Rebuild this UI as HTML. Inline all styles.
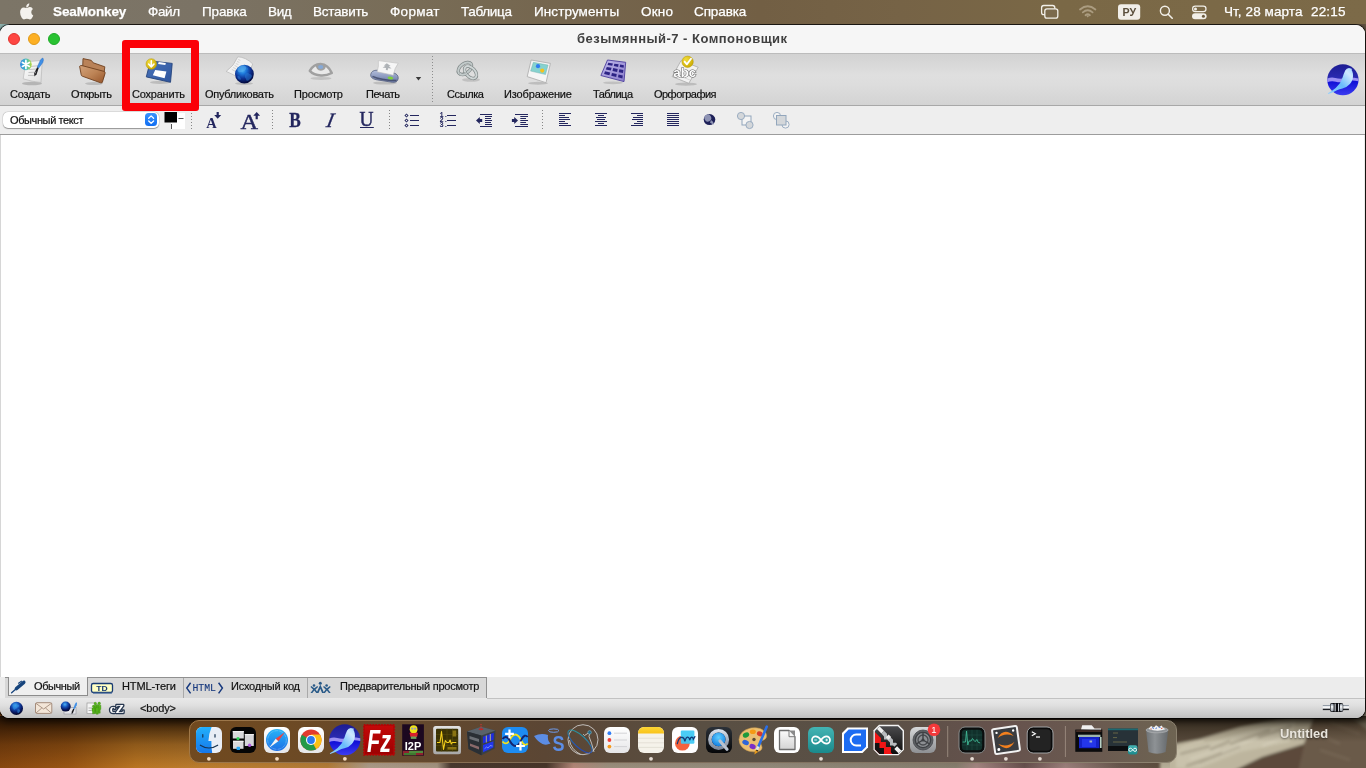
<!DOCTYPE html>
<html lang="ru">
<head>
<meta charset="utf-8">
<title>безымянный-7 - Компоновщик</title>
<style>
html,body{margin:0;padding:0;}
body{width:1366px;height:768px;overflow:hidden;position:relative;background:#8a7a66;font-family:"Liberation Sans",sans-serif;color:#000;}
.abs{position:absolute;}
.t{position:absolute;white-space:nowrap;line-height:1;will-change:transform;}
.t[style*="font-size:11px"]{-webkit-text-stroke:.2px #111;}
/* wallpaper */
#wall{left:0;top:0;width:1366px;height:768px;background:#6a5a48;}
/* menubar */
#menubar{z-index:3;left:0;top:0;width:1366px;height:24px;background:linear-gradient(90deg,#7c7567 0px,#7b7365 200px,#786c56 420px,#74644c 600px,#725f44 760px,#766346 900px,#7a6846 1060px,#7c6a48 1366px);}
#menubar .t{color:#fff;font-size:13.5px;top:4.800px;-webkit-text-stroke:.25px #fff;}
/* window */
#win{left:0;top:25px;width:1365px;height:693px;background:#ececec;border-radius:9px;overflow:hidden;}
#titlebar{left:0;top:0;width:1366px;height:28px;background:#f6f6f6;}
#toolbar{left:0;top:28px;width:1366px;height:53px;background:linear-gradient(180deg,#d2d2d2 0%,#dfdfdf 42%,#dddddd 60%,#d3d3d3 100%);border-top:1px solid #bcbcbc;border-bottom:1px solid #a8a8a8;box-sizing:border-box;}
#fmtbar{left:0;top:81px;width:1366px;height:29px;background:#eeeeee;border-bottom:1px solid #9c9c9c;box-sizing:border-box;}
#editor{left:1px;top:110px;width:1363px;height:542px;background:#fff;}
#tabbar{left:0;top:652px;width:1366px;height:21px;background:#ececec;}
#statusbar{left:0;top:673px;width:1366px;height:20px;background:linear-gradient(180deg,#e9e9e9 0%,#e0e0e0 35%,#c8c8c8 85%,#bebebe 100%);}
.tl{position:absolute;top:8px;width:12px;height:12px;border-radius:50%;box-sizing:border-box;}
.lbl{-webkit-text-stroke:.2px #111;will-change:transform;position:absolute;white-space:nowrap;font-size:11px;line-height:1;top:88.5px;color:#111;}
</style>
</head>
<body>
<div id="wall" class="abs">
<svg class="abs" style="left:0;top:690px;" width="1366" height="78" viewBox="0 690 1366 78">
  <defs>
    <linearGradient id="wH" x1="0" y1="0" x2="1366" y2="0" gradientUnits="userSpaceOnUse">
      <stop offset="0" stop-color="#8c4a10"/><stop offset=".05" stop-color="#9e5814"/><stop offset=".1" stop-color="#c07a24"/><stop offset=".15" stop-color="#c28230"/><stop offset=".24" stop-color="#b8803a"/>
      <stop offset=".27" stop-color="#b0a08c"/><stop offset=".32" stop-color="#a89884"/><stop offset=".33" stop-color="#4a3a30"/><stop offset=".4" stop-color="#4a382c"/><stop offset=".42" stop-color="#b88c7c"/><stop offset=".445" stop-color="#a09482"/>
      <stop offset=".55" stop-color="#989080"/><stop offset=".7" stop-color="#8a8272"/><stop offset=".715" stop-color="#a88a86"/><stop offset=".75" stop-color="#6a5250"/><stop offset=".78" stop-color="#a08480"/><stop offset=".82" stop-color="#6a5a50"/><stop offset=".86" stop-color="#5e4e3c"/><stop offset="1" stop-color="#6a5a4a"/>
    </linearGradient>
    <linearGradient id="wV" x1="0" y1="716" x2="0" y2="768" gradientUnits="userSpaceOnUse">
      <stop offset="0" stop-color="#1a0c02" stop-opacity=".9"/><stop offset=".22" stop-color="#1a0c02" stop-opacity=".68"/><stop offset=".55" stop-color="#1a0c02" stop-opacity=".3"/><stop offset="1" stop-color="#1a0c02" stop-opacity=".04"/>
    </linearGradient>
    <linearGradient id="wV2" x1="0" y1="716" x2="0" y2="742" gradientUnits="userSpaceOnUse"><stop offset="0" stop-color="#1a1206" stop-opacity=".8"/><stop offset=".3" stop-color="#1a1206" stop-opacity=".4"/><stop offset="1" stop-color="#1a1206" stop-opacity="0"/></linearGradient>
    <filter id="wb" x="-10%" y="-30%" width="120%" height="160%"><feGaussianBlur stdDeviation="3"/></filter>
    <filter id="wb1" x="-10%" y="-30%" width="120%" height="160%"><feGaussianBlur stdDeviation="1.600"/></filter>
  </defs>
  <rect x="0" y="690" width="1366" height="78" fill="url(#wH)"/>
  <g filter="url(#wb1)">
    <rect x="1160" y="700" width="220" height="80" fill="#56483a"/>
    <polygon points="1160,747 1200,739 1240,727 1285,718 1300,714 1316,714 1304,744 1262,757 1225,775 1160,775" fill="#bdb59e"/>
    <polygon points="1176,750 1215,741 1250,730 1296,720 1290,742 1240,752 1200,768 1176,768" fill="#c9c2ac"/>
    <polygon points="1316,710 1380,710 1380,780 1288,780 1303,747" fill="#6a5a4a"/>
    <polygon points="1232,775 1266,757 1304,746 1296,780" fill="#5c4a3a"/>
    <polygon points="1345,712 1380,712 1380,740" fill="#8a8270"/>
  </g>
  <g filter="url(#wb1)" opacity=".6">
    <path d="M1180 754 l30 -8 M1200 762 l40 -16 M1230 744 l40 -14 M1186 766 l24 -8 M1256 738 l36 -12 M1210 750 l20 -9" stroke="#8c8470" stroke-width="2"/>
    <path d="M1190 759 l30 -10 M1222 752 l36 -15 M1262 746 l30 -12 M1180 748 l24 -7" stroke="#ded8c4" stroke-width="1.800"/>
    <path d="M1310 730 l30 14 M1320 750 l30 10 M1330 722 l30 12" stroke="#7c6c5a" stroke-width="2.500"/>
  </g>
  <rect x="0" y="716" width="1170" height="52" fill="url(#wV)"/>
  <rect x="1170" y="716" width="196" height="26" fill="url(#wV2)"/>
</svg>
</div>

<div id="menubar" class="abs">
  <span class="t" style="left:53.0px;letter-spacing:-0.125px;font-weight:bold;">SeaMonkey</span>
  <span class="t" style="left:148.2px;letter-spacing:-0.368px;">Файл</span>
  <span class="t" style="left:201.9px;letter-spacing:-0.162px;">Правка</span>
  <span class="t" style="left:268.1px;letter-spacing:-0.369px;">Вид</span>
  <span class="t" style="left:313.4px;letter-spacing:-0.262px;">Вставить</span>
  <span class="t" style="left:390.4px;letter-spacing:0.306px;">Формат</span>
  <span class="t" style="left:461.3px;letter-spacing:-0.323px;">Таблица</span>
  <span class="t" style="left:534.0px;letter-spacing:0.091px;">Инструменты</span>
  <span class="t" style="left:640.8px;letter-spacing:0.208px;">Окно</span>
  <span class="t" style="left:694.2px;letter-spacing:-0.111px;">Справка</span>
  <span class="t" style="left:1224.0px;letter-spacing:0.091px;">Чт, 28 марта</span>
  <span class="t" style="left:1310.8px;letter-spacing:0.176px;">22:15</span>
</div>

<div class="abs" style="left:0;top:24px;width:9px;height:9px;background:#9cc4c0;"></div>
<div id="winshadow" class="abs" style="left:0;top:25px;width:1365px;height:693px;border-radius:9px;box-shadow:0 0 0 1px rgba(0,0,0,.66),0 2px 7px 2px rgba(0,0,0,.62);"></div>
<div id="win" class="abs">
  <div id="titlebar" class="abs">
    <div class="tl" style="left:8px;background:#fe4743;border:1px solid #e0352f;"></div>
    <div class="tl" style="left:28px;background:#fdb024;border:1px solid #e09a1a;"></div>
    <div class="tl" style="left:48px;background:#29c232;border:1px solid #1faa28;"></div>
    <span class="t" style="left:577px;top:7.100px;font-size:13px;font-weight:bold;color:#404040;letter-spacing:.47px;">безымянный-7 - Компоновщик</span>
  </div>
  <div id="toolbar" class="abs"></div>
  <div id="fmtbar" class="abs"></div>
  <div id="editor" class="abs"></div>
  <div id="tabbar" class="abs"></div>
  <div id="statusbar" class="abs"></div>
</div>

<!-- TOOLBAR LABELS -->
<div id="tlabels" class="abs" style="left:0;top:0;">
  <span class="lbl" style="left:10px;letter-spacing:-0.22px;">Создать</span>
  <span class="lbl" style="left:70.5px;letter-spacing:-0.37px;">Открыть</span>
  <span class="lbl" style="left:131.900px;letter-spacing:-0.21px;">Сохранить</span>
  <span class="lbl" style="left:205px;letter-spacing:-0.27px;">Опубликовать</span>
  <span class="lbl" style="left:294px;letter-spacing:-0.18px;">Просмотр</span>
  <span class="lbl" style="left:366px;letter-spacing:-0.41px;">Печать</span>
  <span class="lbl" style="left:447px;letter-spacing:-0.39px;">Ссылка</span>
  <span class="lbl" style="left:504px;letter-spacing:-0.13px;">Изображение</span>
  <span class="lbl" style="left:593px;letter-spacing:-0.52px;">Таблица</span>
  <span class="lbl" style="left:653.5px;letter-spacing:-0.53px;">Орфография</span>
</div>

<!-- FORMAT SELECT -->
<div class="abs" style="left:3px;top:111.5px;width:156px;height:16.200px;background:#fff;border-radius:5px;box-shadow:0 0 0 .5px rgba(0,0,0,.1),0 .7px 1px rgba(0,0,0,.34);"></div>
<div class="abs" style="left:0;top:135px;width:1px;height:542px;background:#d6d6d6;"></div>
<span class="t" style="left:9.800px;top:114.700px;font-size:11px;letter-spacing:-0.39px;color:#111;-webkit-text-stroke:.2px #111;">Обычный текст</span>
<div class="abs" style="left:145px;top:113.200px;width:12.300px;height:12.800px;border-radius:3.500px;background:linear-gradient(180deg,#3b93fb,#0f6df2);"></div>

<!-- TAB BAR -->
<div class="abs" style="left:5px;top:677px;width:481px;height:21px;background:#d8d8d8;border-top:1px solid #909090;box-sizing:border-box;"></div>
<div class="abs" style="left:487px;top:698px;width:878px;height:1px;background:#c2c2c2;"></div>
<div class="abs" style="left:183px;top:678px;width:1px;height:20px;background:#a9a9a9;"></div>
<div class="abs" style="left:307px;top:678px;width:1px;height:20px;background:#a9a9a9;"></div>
<div class="abs" style="left:486px;top:677px;width:1px;height:21px;background:#909090;"></div>
<div class="abs" style="left:8px;top:677px;width:80px;height:19px;background:#efefef;border:1px solid #8c8c8c;border-top:none;box-sizing:border-box;"></div>
<span class="t" style="left:34.400px;top:680.600px;font-size:11px;letter-spacing:-0.42px;color:#111;">Обычный</span>
<span class="t" style="left:122px;top:680.600px;font-size:11px;letter-spacing:-0.1px;color:#111;">HTML-теги</span>
<span class="t" style="left:231px;top:680.600px;font-size:11px;letter-spacing:-0.23px;color:#111;">Исходный код</span>
<span class="t" style="left:340px;top:680.600px;font-size:11px;letter-spacing:-0.23px;color:#111;">Предварительный просмотр</span>
<span class="t" style="left:140px;top:703px;font-size:11px;letter-spacing:-0.14px;color:#111;">&lt;body&gt;</span>

<!-- ICONS SVG -->
<svg id="icons" class="abs" style="left:0;top:0;will-change:transform;z-index:4;" width="1366" height="768" viewBox="0 0 1366 768">
<defs>
<linearGradient id="gPaper" x1="0" y1="0" x2="1" y2="1"><stop offset="0" stop-color="#ffffff"/><stop offset="1" stop-color="#dcdcdc"/></linearGradient>
<linearGradient id="gStar" x1="0" y1="0" x2="1" y2="0"><stop offset="0" stop-color="#2d86e8"/><stop offset=".55" stop-color="#4cc0b8"/><stop offset="1" stop-color="#b4d838"/></linearGradient>
<linearGradient id="gFolder" x1="0" y1="0" x2="1" y2="1"><stop offset="0" stop-color="#d3a27a"/><stop offset=".5" stop-color="#bd8456"/><stop offset="1" stop-color="#96542a"/></linearGradient>
<linearGradient id="gFloppy" x1="0" y1="0" x2="1" y2="1"><stop offset="0" stop-color="#4a74bc"/><stop offset="1" stop-color="#2f559c"/></linearGradient>
<radialGradient id="gGold" cx=".35" cy=".3" r=".8"><stop offset="0" stop-color="#f2dc3a"/><stop offset="1" stop-color="#c8a600"/></radialGradient>
<radialGradient id="gGlobe" cx=".4" cy=".3" r=".68"><stop offset="0" stop-color="#4ab8f6"/><stop offset=".3" stop-color="#1c74d8"/><stop offset=".65" stop-color="#0d2f90"/><stop offset="1" stop-color="#040c40"/></radialGradient>
<linearGradient id="gPrinter" x1="0" y1="0" x2="0" y2="1"><stop offset="0" stop-color="#b4bfdc"/><stop offset="1" stop-color="#6b7aa6"/></linearGradient>
<linearGradient id="gTable" x1="0" y1="0" x2="1" y2="1"><stop offset="0" stop-color="#c2bcec"/><stop offset="1" stop-color="#8a7ccc"/></linearGradient>
<linearGradient id="gDock" x1="0" y1="0" x2="1" y2="0"><stop offset="0" stop-color="#70491f"/><stop offset=".1" stop-color="#6d4a24"/><stop offset=".2" stop-color="#66492c"/><stop offset=".36" stop-color="#5b4634"/><stop offset=".52" stop-color="#594f43"/><stop offset=".7" stop-color="#5a5046"/><stop offset=".82" stop-color="#66524d"/><stop offset=".92" stop-color="#6a5a50"/><stop offset="1" stop-color="#6e6452"/></linearGradient>
<linearGradient id="gDockB" x1="0" y1="0" x2="1" y2="0"><stop offset="0" stop-color="#a07848"/><stop offset=".4" stop-color="#7c6a58"/><stop offset="1" stop-color="#8c8270"/></linearGradient>
<linearGradient id="gFinder" x1="0" y1="0" x2="0" y2="1"><stop offset="0" stop-color="#22b0fb"/><stop offset="1" stop-color="#1677ea"/></linearGradient>
<linearGradient id="gWhiteIc" x1="0" y1="0" x2="0" y2="1"><stop offset="0" stop-color="#ffffff"/><stop offset="1" stop-color="#e6e6e8"/></linearGradient>
<linearGradient id="gSafari" x1="0" y1="0" x2="0" y2="1"><stop offset="0" stop-color="#27b4f8"/><stop offset="1" stop-color="#1c6fe6"/></linearGradient>
<radialGradient id="gSM" cx=".5" cy=".45" r=".6"><stop offset="0" stop-color="#2a34d0"/><stop offset=".7" stop-color="#1418a8"/><stop offset="1" stop-color="#0a0c78"/></radialGradient>
<linearGradient id="gBird" x1="1" y1="0" x2="0" y2="1"><stop offset="0" stop-color="#cfeaff"/><stop offset=".5" stop-color="#7cc4f6"/><stop offset="1" stop-color="#9ad4ff"/></linearGradient>
<linearGradient id="gFz" x1="0" y1="0" x2="0" y2="1"><stop offset="0" stop-color="#c40808"/><stop offset="1" stop-color="#9c0202"/></linearGradient>
<linearGradient id="gFrame" x1="0" y1="0" x2="0" y2="1"><stop offset="0" stop-color="#e2e2e2"/><stop offset="1" stop-color="#a8a8a8"/></linearGradient>
<linearGradient id="gDish" x1="0" y1="0" x2="1" y2="1"><stop offset="0" stop-color="#2aa39a"/><stop offset="1" stop-color="#2238b8"/></linearGradient>
<linearGradient id="gNotes" x1="0" y1="0" x2="0" y2="1"><stop offset="0" stop-color="#fdd635"/><stop offset="1" stop-color="#f9c21a"/></linearGradient>
<linearGradient id="gQTbg" x1="0" y1="0" x2="0" y2="1"><stop offset="0" stop-color="#2c3138"/><stop offset="1" stop-color="#050608"/></linearGradient>
<linearGradient id="gQTring" x1="0" y1="0" x2="0" y2="1"><stop offset="0" stop-color="#d7dee8"/><stop offset="1" stop-color="#7f8a9c"/></linearGradient>
<radialGradient id="gQTblue" cx=".5" cy=".35" r=".7"><stop offset="0" stop-color="#5fd0ff"/><stop offset="1" stop-color="#0f78e0"/></radialGradient>
<linearGradient id="gLO" x1="0" y1="0" x2="0" y2="1"><stop offset="0" stop-color="#fbfbfb"/><stop offset="1" stop-color="#d4d4d4"/></linearGradient>
<linearGradient id="gArd" x1="0" y1="0" x2="0" y2="1"><stop offset="0" stop-color="#43b4b4"/><stop offset="1" stop-color="#1b8a8c"/></linearGradient>
<linearGradient id="gBlk" x1="0" y1="0" x2="0" y2="1"><stop offset="0" stop-color="#4a4a4c"/><stop offset="1" stop-color="#0c0c0c"/></linearGradient>
<linearGradient id="gPref" x1="0" y1="0" x2="0" y2="1"><stop offset="0" stop-color="#d6d8da"/><stop offset="1" stop-color="#8e9093"/></linearGradient>
<linearGradient id="gTrash" x1="0" y1="0" x2="1" y2="0"><stop offset="0" stop-color="#6e7275"/><stop offset=".4" stop-color="#8e9295"/><stop offset="1" stop-color="#666a6d"/></linearGradient>
<linearGradient id="gSM2" x1="0" y1="0" x2="0" y2="1"><stop offset="0" stop-color="#1c1c92"/><stop offset=".48" stop-color="#2b2bb4"/><stop offset=".52" stop-color="#0c0cd4"/><stop offset="1" stop-color="#3c3cf0"/></linearGradient>
<linearGradient id="gBird2" x1="0" y1="1" x2="1" y2="0"><stop offset="0" stop-color="#8fd0ff"/><stop offset=".45" stop-color="#69bcfb"/><stop offset=".8" stop-color="#cfe8ff"/><stop offset="1" stop-color="#9fd4ff"/></linearGradient>
<radialGradient id="gGlobeS" cx=".42" cy=".28" r=".7"><stop offset="0" stop-color="#4db4f6"/><stop offset=".4" stop-color="#1450b8"/><stop offset=".75" stop-color="#081a66"/><stop offset="1" stop-color="#03082e"/></radialGradient>
<linearGradient id="gPipe" x1="0" y1="0" x2="0" y2="1"><stop offset="0" stop-color="#5a6878"/><stop offset=".22" stop-color="#e4e8ec"/><stop offset=".6" stop-color="#ffffff"/><stop offset=".78" stop-color="#30343c"/><stop offset="1" stop-color="#000"/></linearGradient>
<linearGradient id="gPipeV" x1="0" y1="0" x2="0" y2="1"><stop offset="0" stop-color="#8a94a0"/><stop offset=".4" stop-color="#f4f6f8"/><stop offset="1" stop-color="#9aa2ac"/></linearGradient>
<!--DEFS-->
</defs>
<!-- ===== toolbar icons ===== -->
<g id="ic-new">
  <ellipse cx="32" cy="83.5" rx="10" ry="1.8" fill="#000" opacity=".18"/>
  <path d="M26 61.8 L42.2 60.4 L41 82.6 Q32 81.6 23.2 78.8 Z" fill="url(#gPaper)" stroke="#b9b9b9" stroke-width=".7"/>
  <path d="M29.5 66.5 L38 65.8 M29 69.5 L36.5 69 M28.5 72.5 L35 72.2 M28 75.4 L34 75.5" stroke="#bdbdbd" stroke-width=".9" fill="none"/>
  <path d="M42.9 58 Q44 59.5 42.8 62.5 L38.6 68.2 L37.2 67.2 L40.2 60.6 Q41.6 58.2 42.9 58 Z" fill="#3f8fe6" stroke="#2a6cc0" stroke-width=".5"/>
  <path d="M37.2 67.2 L38.6 68.2 L36.6 74.2 L34.4 76.6 L34.2 73.2 Z" fill="#1b1b1f"/>
  <path d="M35.2 73.5 L35.9 71.5" stroke="#d8d8d8" stroke-width=".6"/>
  <circle cx="25.9" cy="64.4" r="5.8" fill="url(#gStar)"/>
  <path d="M25.9 60.4 V68.4 M22.4 62.4 L29.4 66.4 M22.4 66.4 L29.4 62.4" stroke="#fff" stroke-width="1.7" stroke-linecap="round"/>
</g>
<g id="ic-open">
  <ellipse cx="94" cy="83.6" rx="9" ry="1.5" fill="#000" opacity=".15"/>
  <path d="M83 58.6 L91.2 60.3 L93.2 62.8 L104.8 66.8 L103.5 78 L82.5 72 Z" fill="#b98258" stroke="#6e3f1e" stroke-width=".9" stroke-linejoin="round"/>
  <path d="M79.6 66.3 Q80.5 65.2 82 65.6 L104.2 71.4 Q105.4 71.9 105.1 73.2 L102.4 82.2 Q101.9 83.3 100.6 82.8 L82.3 76.2 Q81.3 75.8 81.2 74.8 Z" fill="url(#gFolder)" stroke="#6e3f1e" stroke-width=".9" stroke-linejoin="round"/>
</g>
<g id="ic-save">
  <ellipse cx="160" cy="82.4" rx="10" ry="1.6" fill="#000" opacity=".15"/>
  <path d="M150.4 61 L172.2 63.4 L170.5 82.3 L146.3 76.9 Z" fill="url(#gFloppy)" stroke="#24437c" stroke-width=".9" stroke-linejoin="round"/>
  <path d="M155.2 69.9 L166.4 71.6 L164.6 78.2 L152.8 75.2 Z" fill="#fff"/>
  <path d="M158.7 62.1 L165.8 63 L165.3 65 L158.1 64.1 Z" fill="#fff"/>
  <circle cx="151.3" cy="64" r="5.3" fill="url(#gGold)" stroke="#b79a00" stroke-width=".5"/>
  <path d="M151.3 60.9 V65.8 M148.6 64 L151.3 67 L154 64" stroke="#fff" stroke-width="1.6" fill="none" stroke-linecap="round" stroke-linejoin="round"/>
</g>
<g id="ic-publish">
  <ellipse cx="244" cy="83.6" rx="9" ry="1.4" fill="#000" opacity=".15"/>
  <path d="M237.8 56.8 Q246 57.2 252.8 64 Q249 70 247.6 78.6 Q236 77.6 226.2 71.4 Q234 66 237.8 56.8 Z" fill="#f1f1f1" stroke="#b5b5b5" stroke-width=".7"/>
  <path d="M238.2 59.5 L240.4 60.4 M237 61.5 L239.4 62.4 M235.8 63.5 L238.4 64.6 M234.6 65.5 L237.4 66.8 M233.2 67.5 L236.2 69 M231.8 69.4 L235.2 71.2" stroke="#c4c4c4" stroke-width=".7"/>
  <circle cx="244.4" cy="74.1" r="9.4" fill="url(#gGlobe)"/>
  <g fill="#2a7fd8" opacity=".5"><path d="M238.500 67.500 q2.500 -2.500 5 -1.500 q1 1.500 3 1 q2 .5 1.500 2.500 q-1.500 1 -3 .5 q-1 1.500 -3 1.500 q-1 2 -3 1.500 q-1.500 -2.500 -.5 -5.500z"/><path d="M246 73.500 q2 -1 3.500 .5 q2 0 2.500 2 q-.5 2.500 -2.500 3.500 q-1.500 2 -3 1 q-.5 -2 -1.500 -3 q-.5 -2.500 1 -4z"/><path d="M237.500 76 q1.500 -.5 2.500 1 q1.500 1.500 .5 3 q-2 -.5 -3 -2z"/></g>
  <ellipse cx="241.800" cy="68.800" rx="4.600" ry="3" fill="#7fd0ff" opacity=".35" transform="rotate(-25 241.800 68.800)"/>
</g>
<g id="ic-eye">
  <ellipse cx="321" cy="78.400" rx="10.500" ry="1.500" fill="#000" opacity=".12"/>
  <path d="M309.800 70.800 Q313.600 63.800 320.600 63.900 Q328 64.200 331.800 73 Q326.600 75.800 321 75.500 Q313.600 75 309.800 70.800 Z" fill="#e9e9e9" stroke="#a0a0a0" stroke-width="2.500" stroke-linejoin="round"/>
  <path d="M315.600 64.800 Q320.500 63 325.800 65.400 Q325.800 70.400 320.800 70.700 Q316 70.400 315.600 64.800Z" fill="#a0a0a0"/>
  <ellipse cx="320.700" cy="67" rx="2.600" ry="2.100" fill="#86a9d6"/>
</g>
<g id="ic-print">
  <ellipse cx="385" cy="83" rx="12" ry="1.600" fill="#000" opacity=".14"/>
  <path d="M370.700 74.500 Q371.500 70 377.500 70.200 L394 73 Q398.500 74.500 398.200 78.500 Q397.500 82.800 392.500 82.300 L376 79.700 Q370.200 78.300 370.700 74.500 Z" fill="url(#gPrinter)" stroke="#55607f" stroke-width=".8"/>
  <path d="M372.500 76.300 Q380 80 396.500 80.600" stroke="#39425f" stroke-width="1.500" fill="none" opacity=".75"/>
  <path d="M378.400 60.600 L398.200 63.300 Q394.500 68 393.300 75.200 L377.200 71.800 Q379 66 378.400 60.600 Z" fill="#f6f6f6" stroke="#bdbdbd" stroke-width=".6"/>
  <path d="M386.800 63.200 L390.600 66 L388.800 66.200 L391.600 68.400 L388 68.300 L387.800 70.200 L385.800 69.900 L386 68 L382.600 67.400 L385.600 65.800 L383.900 65.400 Z" fill="#aeb2b6"/>
  <ellipse cx="390.400" cy="78" rx="2.800" ry="1.400" fill="#7fd13b" transform="rotate(8 390.400 78)"/>
</g>
<path d="M415.800 77 h5.400 l-2.700 3.600z" fill="#3a3a3a"/>
<path d="M432.500 56 V103" stroke="#8d8d8d" stroke-width="1" stroke-dasharray="1 2"/>
<g id="ic-link">
  <ellipse cx="471" cy="79.800" rx="9" ry="1.900" fill="#000" opacity=".13"/>
  <ellipse cx="464.900" cy="68.400" rx="7.700" ry="4.700" transform="rotate(-37 464.900 68.400)" fill="none" stroke="#7e8686" stroke-width="3.300"/>
  <ellipse cx="464.900" cy="68.400" rx="7.700" ry="4.700" transform="rotate(-37 464.900 68.400)" fill="none" stroke="#c2caca" stroke-width="2"/>
  <ellipse cx="470.500" cy="72.300" rx="7.400" ry="4.500" transform="rotate(46 470.500 72.300)" fill="none" stroke="#7e8686" stroke-width="3.300"/>
  <ellipse cx="470.500" cy="72.300" rx="7.400" ry="4.500" transform="rotate(46 470.500 72.300)" fill="none" stroke="#cfd6d6" stroke-width="2"/>
  <path d="M459.600 73.500 A7.700 4.700 -37 0 0 466 73.800" fill="none" stroke="#7e8686" stroke-width="3.300"/>
  <path d="M459.600 73.500 A7.700 4.700 -37 0 0 466 73.800" fill="none" stroke="#c2caca" stroke-width="2"/>
</g>
<g id="ic-image">
  <ellipse cx="538" cy="83.300" rx="10" ry="1.500" fill="#000" opacity=".14"/>
  <path d="M531.200 60 L550.400 63.400 L546 82.700 L527.200 76.600 Z" fill="#f5f5f5" stroke="#a9a9a9" stroke-width=".8" stroke-linejoin="round"/>
  <path d="M533.300 62.300 L548.100 65.100 L545.500 74.500 L530.600 71.100 Z" fill="#86d2cf" stroke="#6aa9a7" stroke-width=".4"/>
  <circle cx="538" cy="66.200" r="2.100" fill="#2f7df2"/>
  <circle cx="542.200" cy="70.600" r="2.100" fill="#f6c21c"/>
</g>
<g id="ic-table">
  <ellipse cx="613" cy="82.800" rx="10" ry="1.400" fill="#000" opacity=".13"/>
  <path d="M607.500 60 L625.700 62.300 L624 81.600 L600.900 75.500 Z" fill="url(#gTable)" stroke="#4b3d9c" stroke-width=".9" stroke-linejoin="round"/>
  <g fill="#2c2384"><path d="M608.3 62.8 L612.9 63.5 L612.2 65.8 L607.5 65.0z"/><path d="M614.4 63.7 L618.6 64.3 L618.1 66.9 L613.8 66.1z"/><path d="M620.1 64.6 L623.9 65.2 L623.6 67.8 L619.7 67.1z"/><path d="M606.8 66.9 L611.6 67.8 L610.8 70.5 L605.8 69.4z"/><path d="M613.2 68.1 L617.7 69.0 L617.1 71.9 L612.5 70.9z"/><path d="M619.3 69.3 L623.4 70.1 L623.0 73.1 L618.8 72.2z"/><path d="M605.0 71.3 L610.2 72.5 L609.4 75.2 L604.1 73.9z"/><path d="M612.0 72.9 L616.7 74.0 L616.2 76.9 L611.2 75.7z"/><path d="M618.5 74.4 L622.8 75.4 L622.4 78.5 L618.0 77.3z"/></g>
</g>
<g id="ic-spell">
  <ellipse cx="686" cy="84.200" rx="11" ry="1.600" fill="#000" opacity=".15"/>
  <path d="M681 60.600 L698.200 67.300 L688.800 83.300 L672.200 76.600 Z" fill="#f2f2f2" stroke="#a8a8a8" stroke-width=".8" stroke-linejoin="round"/>
  <path d="M676 74.500 L690 80 M678 71 L692 76.500" stroke="#d0d0d0" stroke-width=".8"/>
  <text x="684.800" y="77" text-anchor="middle" font-family="Liberation Sans, sans-serif" font-weight="bold" font-size="12.500" fill="#fdfdfd" stroke="#5c5c5c" stroke-width="1" paint-order="stroke" textLength="23" lengthAdjust="spacingAndGlyphs">abc</text>
  <circle cx="687.600" cy="61.800" r="5.700" fill="url(#gGold)" stroke="#b79a00" stroke-width=".5"/>
  <path d="M684.600 61.600 L686.900 64.300 L691 58.800" stroke="#fff" stroke-width="1.900" fill="none" stroke-linecap="round" stroke-linejoin="round"/>
</g>
<!-- ===== format bar ===== -->
<g id="fmt">
  <path d="M148.700 118.200 l2.450 -2.300 l2.450 2.300 M148.700 121 l2.450 2.300 l2.450 -2.300" stroke="#fff" stroke-width="1.300" fill="none" stroke-linecap="round" stroke-linejoin="round"/>
  <rect x="171" y="113" width="14" height="16" fill="#fff"/>
  <rect x="164.500" y="112" width="12.500" height="10.500" fill="#000"/>
  <path d="M178.500 118.500 H183.500" stroke="#555" stroke-width="1"/>
  <path d="M171.500 124 V129" stroke="#555" stroke-width="1"/>
  <g stroke="#868686" stroke-width="1" stroke-dasharray="1 2" fill="none">
    <path d="M191.500 110 V130"/><path d="M272.500 110 V130"/><path d="M389.500 110 V130"/><path d="M542.500 110 V130"/>
  </g>
  <g fill="#23265e" stroke="none">
    <path d="M216.600 112 h2.200 v3 h2.400 l-3.500 3.800 l-3.500 -3.800 h2.400z"/>
    <path d="M255.600 119.200 h2.200 v-3.400 h2.300 l-3.400 -3.800 l-3.400 3.800 h2.300z"/>
    <path d="M406.500 113.400 l2.100 2.100 l-2.100 2.100 l-2.100 -2.100z M406.500 118.400 l2.100 2.100 l-2.100 2.100 l-2.100 -2.100z M406.500 123.400 l2.100 2.100 l-2.100 2.100 l-2.100 -2.100z"/>
    <rect x="410" y="115" width="9" height="1"/><rect x="410" y="120" width="9" height="1"/><rect x="410" y="125" width="9" height="1"/>
    <rect x="447" y="115" width="9" height="1"/><rect x="447" y="120" width="9" height="1"/><rect x="447" y="125" width="9" height="1"/>
    <!-- outdent -->
    <rect x="480" y="114" width="12" height="1"/><rect x="485" y="116" width="7" height="1"/><rect x="485" y="118" width="6" height="1"/><rect x="485" y="120" width="7" height="1"/><rect x="485" y="122" width="6" height="1"/><rect x="485" y="124" width="7" height="1"/><rect x="480" y="126" width="12" height="1"/>
    <path d="M476 120.500 l3.800 -3.600 v2.100 h2.400 v3 h-2.400 v2.100z"/>
    <!-- indent -->
    <rect x="515" y="114" width="13" height="1"/><rect x="520.300" y="116" width="7.700" height="1"/><rect x="520.300" y="118" width="5.700" height="1"/><rect x="520.300" y="120" width="7.700" height="1"/><rect x="520.300" y="122" width="5.700" height="1"/><rect x="520.300" y="124" width="7.700" height="1"/><rect x="515" y="126" width="13" height="1"/>
    <path d="M518 120.500 l-3.800 -3.600 v2.100 h-2.300 v3 h2.300 v2.100z"/>
    <!-- aligns -->
    <rect x="559" y="113" width="12" height="1"/><rect x="559" y="115" width="6" height="1"/><rect x="559" y="117" width="10" height="1"/><rect x="559" y="119" width="11" height="1"/><rect x="559" y="121" width="6" height="1"/><rect x="559" y="123" width="9" height="1"/><rect x="559" y="125" width="12" height="1"/><rect x="595" y="113" width="12" height="1"/><rect x="598" y="115" width="6" height="1"/><rect x="596" y="117" width="10" height="1"/><rect x="597" y="119" width="8" height="1"/><rect x="595" y="121" width="12" height="1"/><rect x="598" y="123" width="6" height="1"/><rect x="595" y="125" width="12" height="1"/><rect x="631" y="113" width="12" height="1"/><rect x="637" y="115" width="6" height="1"/><rect x="633" y="117" width="10" height="1"/><rect x="632" y="119" width="11" height="1"/><rect x="637" y="121" width="6" height="1"/><rect x="634" y="123" width="9" height="1"/><rect x="631" y="125" width="12" height="1"/><rect x="667" y="113" width="12" height="1"/><rect x="667" y="115" width="12" height="1"/><rect x="667" y="117" width="12" height="1"/><rect x="667" y="119" width="12" height="1"/><rect x="667" y="121" width="12" height="1"/><rect x="667" y="123" width="12" height="1"/><rect x="667" y="125" width="12" height="1"/>
  </g>
  <g fill="#ececec"><circle cx="406.500" cy="115.500" r=".7"/><circle cx="406.500" cy="120.500" r=".7"/><circle cx="406.500" cy="125.500" r=".7"/></g>
  <g font-family="Liberation Mono, monospace" font-weight="bold" font-size="7" fill="#23265e">
    <text x="439.600" y="117.300">1.</text><text x="439.600" y="122.300">2.</text><text x="439.600" y="127.300">3.</text>
  </g>
  <g font-family="Liberation Serif, serif" fill="#23265e">
    <text x="206.300" y="127.800" font-size="14.500" font-weight="bold">A</text>
    <text x="240.500" y="129" font-size="22" stroke="#23265e" stroke-width=".45" textLength="17.500" lengthAdjust="spacingAndGlyphs">A</text>
    <text x="289.300" y="127" font-size="20.500" font-weight="bold" stroke="#23265e" stroke-width=".3" textLength="11.500" lengthAdjust="spacingAndGlyphs">B</text>
    <text transform="translate(324.800 127) skewX(-21)" x="0" y="0" font-size="20.500" stroke="#23265e" stroke-width=".3">I</text>
    <text x="359.600" y="126.200" font-size="20" stroke="#23265e" stroke-width=".45" textLength="14" lengthAdjust="spacingAndGlyphs">U</text>
  </g>
  <rect x="360" y="127" width="13.800" height="1" fill="#23265e"/>
  <ellipse cx="709.500" cy="119.600" rx="5.800" ry="5.500" fill="#1d2058"/>
  <ellipse cx="707.800" cy="118" rx="3.400" ry="3.600" fill="#8e93b4" transform="rotate(-25 707.800 118)"/>
  <path d="M711 120 q2.500 1 3 4.500 q-2.500 -.5 -4 -2z" fill="#8e93b4"/>
  <g>
    <rect x="742" y="116" width="9" height="9" fill="#f4f4f4" stroke="#92a6bc" stroke-width="1"/>
    <circle cx="741" cy="116" r="3.600" fill="#d4d7da" stroke="#92a6bc" stroke-width=".9"/>
    <circle cx="749.500" cy="125" r="3.600" fill="#d4d7da" stroke="#92a6bc" stroke-width=".9"/>
    <circle cx="777" cy="116" r="3.600" fill="#f4f4f4" stroke="#92a6bc" stroke-width=".9"/>
    <circle cx="785.500" cy="124.500" r="3.600" fill="#f4f4f4" stroke="#92a6bc" stroke-width=".9"/>
    <rect x="776.500" y="115.500" width="9.500" height="9.500" fill="#d4d7da" stroke="#92a6bc" stroke-width="1"/>
  </g>
</g>
<!-- ===== tab/status icons ===== -->
<g id="tabicons">
  <path d="M23.800 682.400 L16.400 688.600" stroke="#17447c" stroke-width="3.400" stroke-linecap="round"/><path d="M16.800 688.200 L11.600 692.700" stroke="#17447c" stroke-width="1.300" stroke-linecap="round"/><path d="M25 681 l-2.600 2.400 M18.200 683.400 l3.600 -2.400" stroke="#17447c" stroke-width="1.200"/>
  <rect x="91.500" y="683.500" width="21" height="9" rx="1.800" fill="#ffffc4" stroke="#173a72" stroke-width="1.300"/>
  <path d="M93 693.200 h19" stroke="#5a7aa8" stroke-width="1"/>
  <text x="102" y="691" text-anchor="middle" font-family="Liberation Sans, sans-serif" font-weight="bold" font-size="7.600" fill="#173a72" textLength="11.400" lengthAdjust="spacingAndGlyphs">TD</text>
  <path d="M190.600 682.800 l-3.800 5.300 l3.800 5.300 M218.600 682.800 l3.800 5.300 l-3.800 5.300" stroke="#17397e" stroke-width="1.500" fill="none"/>
  <text x="204.200" y="691.300" text-anchor="middle" font-family="Liberation Mono, monospace" font-size="11.800" fill="#17397e" stroke="#17397e" stroke-width=".15" textLength="23.600" lengthAdjust="spacingAndGlyphs">HTML</text>
  <g fill="#295a88">
    <circle cx="320.300" cy="683.300" r="1.500"/><path d="M320.300 684.500 l3.800 8.500 h-2 l-1.800 -4.200 l-1.800 4.200 h-2z"/>
    <circle cx="314" cy="685.500" r="1.300"/><path d="M311.300 686 l3 2.200 l3 -2.200 l.8 1 l-2.600 2.400 l2.600 3.600 h-1.800 l-2 -2.600 l-2 2.600 h-1.800 l2.600 -3.600 l-2.600 -2.400z"/>
    <circle cx="326.600" cy="685.500" r="1.300"/><path d="M323.900 686 l3 2.200 l3 -2.200 l.8 1 l-2.600 2.400 l2.600 3.600 h-1.800 l-2 -2.600 l-2 2.600 h-1.800 l2.600 -3.600 l-2.600 -2.400z"/>
  </g>
</g>
<g id="statusicons">
  <circle cx="16.400" cy="708.300" r="6.600" fill="url(#gGlobeS)"/>
  <path d="M12.500 705 q2 -1.800 3.800 -1 q.8 1.200 2.200 .8 q1.200 .6 .6 1.800 q-1.400 .4 -2.400 1.600 q-1.600 .4 -2.600 1.800 q-1.400 -1 -1.600 -5z M17.500 709.500 q1.500 -.8 2.600 .4 q.2 1.800 -1.200 2.800 q-1.200 .6 -1.600 -.8z" fill="#2f8fe2" opacity=".6"/>
  <rect x="35.500" y="702.700" width="16.300" height="10.700" rx="1.300" fill="#f3e6d8" stroke="#a48c7c" stroke-width="1"/>
  <path d="M36 703.400 l7.650 5.600 l7.650 -5.600 M36 713 l5.800 -5 M51.300 713 l-5.800 -5" stroke="#a48c7c" stroke-width=".9" fill="none"/>
  <rect x="64" y="707.500" width="12" height="6.500" fill="#e4e4e8" stroke="#8f8f98" stroke-width=".6"/>
  <circle cx="65.700" cy="706.600" r="5" fill="url(#gGlobeS)"/>
  <path d="M76.600 702.300 q.9 1 .1 3 l-2.300 4 l-1.200 -.6 l1.700 -4.400 q.8 -1.800 1.700 -2z" fill="#3f8fe6"/>
  <path d="M73.200 708.700 l1.200 .6 l-1.500 3.800 l-1.300 1.100 l.1 -2.400z" fill="#1b1b1f"/>
  <rect x="87" y="703" width="8" height="10.500" fill="#f4f4f4" stroke="#9a9a9a" stroke-width=".7"/>
  <path d="M88.500 708 h4 M88.500 710.500 h3" stroke="#b0b0b0" stroke-width="1"/>
  <g fill="#55b41a" stroke="#38860c" stroke-width=".35">
    <circle cx="95.300" cy="703.600" r="1.300"/><path d="M93.600 705.400 h3.400 v4.200 h-.7 v3.800 h-2 v-3.800 h-.7z"/>
    <circle cx="99.200" cy="703.400" r="1.300"/><path d="M97.500 705.200 h3.400 v4.200 h-.7 v3.800 h-2 v-3.800 h-.7z"/>
    <circle cx="97.200" cy="705.800" r="1.300"/><path d="M95.500 707.600 h3.400 v3.600 h-.7 v3 h-2 v-3 h-.7z"/>
    <circle cx="93.400" cy="706.400" r="1.100"/><path d="M92 708 h2.800 v3.200 h-.5 v2.600 h-1.800 v-2.600 h-.5z"/>
  </g>
  <text x="117" y="713.200" text-anchor="middle" font-family="Liberation Serif, serif" font-weight="bold" font-size="13" fill="#fff" stroke="#27374f" stroke-width="2.700" stroke-linejoin="round" paint-order="stroke" textLength="14.500" lengthAdjust="spacingAndGlyphs">cZ</text>
  <!-- online indicator right -->
  <g>
    <rect x="1322.800" y="705.200" width="26.100" height="4.900" fill="url(#gPipe)"/>
    <rect x="1330" y="703" width="13.200" height="9" rx="1.800" fill="#0c0c10"/>
    <rect x="1330.600" y="703.800" width="3" height="7.400" rx="1" fill="url(#gPipeV)"/>
    <rect x="1334.600" y="703.600" width="1.100" height="7.800" fill="#d0d4da"/>
    <rect x="1338" y="703.600" width="1.100" height="7.800" fill="#d0d4da"/>
    <rect x="1340" y="703.800" width="2.700" height="7.400" rx="1" fill="url(#gPipeV)"/>
  </g>
</g>
<!-- ===== dock ===== -->
<g id="dock">
  <rect x="189.500" y="720.500" width="987" height="42" rx="9.500" fill="url(#gDock)" stroke="url(#gDockB)" stroke-width="1"/>
  <!-- Finder -->
  <g>
    <rect x="196" y="727" width="26" height="26" rx="6" fill="#e9eef6"/>
    <path d="M202 727 h9.600 q-2.800 6.500 -3.200 14 h3 q-.2 6 .8 12 h-10.200 a6 6 0 0 1 -6 -6 v-14 a6 6 0 0 1 6 -6z" fill="url(#gFinder)"/>
    <path d="M200.300 745.200 q8.700 5.600 17.400 0" stroke="#17324f" stroke-width="1.100" fill="none" stroke-linecap="round"/>
    <path d="M202.800 734.500 v2.600 M215 734.500 v2.600" stroke="#17324f" stroke-width="1.200" stroke-linecap="round"/>
  </g>
  <!-- Mission control-ish -->
  <g>
    <rect x="230" y="727" width="26" height="26" rx="6" fill="#050505"/>
    <rect x="232.800" y="731" width="11" height="7.500" fill="#d9d9db"/><rect x="244.800" y="734" width="9" height="12" fill="#d5d5d8"/><rect x="233" y="740.800" width="10.500" height="8" fill="#d9d9db"/>
    <rect x="232.800" y="731" width="11" height="1.200" fill="#efefef"/><rect x="244.800" y="734" width="9" height="1.200" fill="#efefef"/><rect x="233" y="740.800" width="10.500" height="1.200" fill="#efefef"/>
    <circle cx="238" cy="738.600" r="1.700" fill="#2fd158"/><rect x="236.600" y="746.800" width="3.400" height="3.200" rx=".6" fill="#2aa8f6"/><circle cx="249.600" cy="745.200" r="1.700" fill="#b05be0"/>
  </g>
  <!-- Safari -->
  <g>
    <rect x="264" y="727" width="26" height="26" rx="6" fill="url(#gWhiteIc)"/>
    <circle cx="277" cy="740" r="11" fill="url(#gSafari)"/>
    <circle cx="277" cy="740" r="9.300" fill="none" stroke="#cfe6fb" stroke-width=".9" stroke-dasharray=".4 .9" opacity=".9"/>
    <path d="M284.800 732.200 L275.700 738.700 L278.300 741.300 Z" fill="#f2413c"/>
    <path d="M269.200 747.800 L275.700 738.700 L278.300 741.300 Z" fill="#f4f4f4"/>
  </g>
  <!-- Chrome -->
  <g>
    <rect x="298" y="727" width="26" height="26" rx="6" fill="url(#gWhiteIc)"/>
    <circle cx="311" cy="740" r="10.600" fill="#e33b2e"/>
    <path d="M311 740 L301.820 734.700 A10.600 10.600 0 0 0 316.300 749.180 Z" fill="#229a48"/>
    <path d="M311 740 L316.300 749.180 A10.600 10.600 0 0 0 320.180 734.700 L311 734.700 Z" fill="#fbc116"/>
    <path d="M311 740 L320.180 734.700 L311 734.700 Z" fill="#fbc116"/>
    <circle cx="311" cy="740" r="5" fill="#fff"/><circle cx="311" cy="740" r="3.900" fill="#2c7bee"/>
  </g>
  <!-- SeaMonkey -->
  <g>
    <circle cx="344.800" cy="739.700" r="15.500" fill="url(#gSM2)"/>
    <path d="M329.300 738.500 q4 -1.800 8 -.6 q4.500 1.400 9 .3 q6 -1.700 14 .1 v2.800 q-7 -1.600 -13 .2 q-5 1.500 -9.500 .3 q-4.500 -1.200 -8.600 .5z" fill="#a99cf8" opacity=".9"/>
    <g transform="translate(-998.1 659.95)"><path d="M1350 68.200 q-3.200 -.6 -4.800 2.400 q-1.400 3 -2.300 6 q-1.200 4 -3.200 7 q-3.400 4.600 -8 7.400 l-3.800 2.200 l.4 .9 q4.600 -1.400 8.600 -3.800 q2.600 -1.300 5.600 -1.900 q4.400 -1 7.400 -4.400 q4 -4.600 3 -10.400 q-.4 -2.400 -1.400 -3.800 l.7 -.9z" fill="url(#gBird2)"/></g>
  </g>
  <!-- FileZilla -->
  <g>
    <rect x="363.800" y="724.800" width="30.600" height="30.200" fill="#b30606" stroke="#b30606" stroke-width="1.500" stroke-dasharray="1.600 1.300"/>
    <rect x="365" y="726" width="28.200" height="27.800" fill="url(#gFz)"/>
    <text x="379" y="751.500" text-anchor="middle" font-family="Liberation Sans, sans-serif" font-weight="bold" font-style="italic" font-size="31" fill="#fff" textLength="24" lengthAdjust="spacingAndGlyphs">Fz</text>
  </g>
  <!-- I2P -->
  <g>
    <rect x="402.200" y="724.300" width="21.700" height="31.400" fill="#1c0820"/>
    <path d="M409.500 733 q4 -2.500 8.500 0 l-1 4 h-6.500z" fill="#d8222c"/>
    <rect x="410.800" y="736.500" width="5.600" height="2.400" fill="#6ea25a"/>
    <circle cx="413.600" cy="729.200" r="3.900" fill="#efe316"/>
    <circle cx="412.200" cy="728.600" r="1.200" fill="#9fa0b4"/><circle cx="415.100" cy="728.600" r="1.200" fill="#9fa0b4"/>
    <text x="413" y="750" text-anchor="middle" font-family="Liberation Sans, sans-serif" font-weight="bold" font-size="10" fill="#fff" textLength="16.500" lengthAdjust="spacingAndGlyphs">I2P</text>
    <rect x="402.800" y="750.800" width="20.400" height="4.400" fill="#8e2230"/><rect x="409" y="750.800" width="14" height="2.200" fill="#4f8c3c"/><rect x="404" y="753" width="12" height="2.200" fill="#3f7a30"/>
  </g>
  <!-- ECG monitor -->
  <g>
    <rect x="433.200" y="726" width="27.800" height="28.200" rx="2.500" fill="url(#gFrame)"/>
    <rect x="436" y="728.800" width="22.200" height="22.600" rx="1" fill="#3b3204"/>
    <path d="M436 734.400 h22.200 M436 740 h22.200 M436 745.600 h22.200 M441.500 728.800 v22.600 M447 728.800 v22.600 M452.500 728.800 v22.600" stroke="#5a4e0c" stroke-width=".6"/>
    <path d="M437 742.500 h3 l1.500 -11 l2 18 l1.800 -9 l1.600 2 h2 l1.200 -2.500 l1.200 4 l1 -1.500 h4" stroke="#f3cf1c" stroke-width="1.100" fill="none" stroke-linejoin="round"/>
    <rect x="452.600" y="730.500" width="3.600" height="6" fill="#8a7412"/><rect x="447.500" y="747" width="9" height="2.600" fill="#8a7412"/>
  </g>
  <!-- Cube -->
  <g>
    <path d="M467 731.500 L481 726.800 L495.500 730.500 L494.800 748.500 L481.500 755.300 L468.500 749z" fill="#3a4046"/>
    <path d="M467 731.500 L481 726.800 L495.500 730.500 L481.300 735.500z" fill="#59626a"/>
    <path d="M467 731.500 L481.300 735.500 L481.500 755.300 L468.500 749z" fill="#2a2f34"/>
    <path d="M483 736.700 L493.800 732.800 L493.600 739.800 L483 743.600z" fill="#1f2ce0"/>
    <path d="M483 745 L493.500 741.200 L493.300 747.600 L483 752.200z" fill="#2136ee"/>
    <path d="M486.300 735.500 v7 M490.300 734 v7" stroke="#d8d46a" stroke-width=".8"/>
    <path d="M484.500 748.800 l2 -1.800 l1.500 1 l2 -2.400 l2.500 .4" stroke="#9ab0ff" stroke-width=".7" fill="none"/>
    <path d="M469.500 736 l9.500 3 v3 l-9.500 -3z" fill="#6b6f74"/><path d="M470 743.500 l9 3.200 v2.800 l-9 -3.400z" fill="#8a6a6a"/>
    <path d="M481 724 v4" stroke="#e03030" stroke-width="1" stroke-dasharray="1 .8"/><ellipse cx="481" cy="729.300" rx="2.400" ry="1" fill="#c02828"/>
  </g>
  <!-- blue wave -->
  <g>
    <rect x="502" y="727" width="26" height="26" rx="6" fill="#1d8cf2"/>
    <path d="M502.500 741.500 q3.200 3.800 6.400 0 q3.200 -7 6.400 -7 q3.400 0 6.400 7 q3 5.500 6 2" stroke="#f3e21a" stroke-width="1.900" fill="none"/>
    <path d="M502.500 739 q3.200 -4 6.400 0 q3.200 7 6.400 7 q3.400 0 6.400 -7 q3 -5.500 6 -2" stroke="#14246e" stroke-width="1.900" fill="none"/>
    <path d="M509.500 729.400 v8.800 M505.100 733.800 h8.800 M520.500 741.600 v8.800 M516.100 746 h8.800" stroke="#fff" stroke-width="2.200"/>
  </g>
</g>
<g id="dock2">
  <!-- S thing -->
  <g>
    <path d="M534 736 q7 -3.500 14 -1 q-1 5 2.500 8.500 q-4 2 -8 .5 q-5 -2.500 -8.500 -8z" fill="#5c8de4"/>
    <ellipse cx="553.700" cy="730.600" rx="5.200" ry="1.700" fill="none" stroke="#6f9cec" stroke-width="1"/>
    <text x="558.600" y="750.600" text-anchor="middle" font-family="Liberation Sans, sans-serif" font-weight="bold" font-size="22" fill="#5c8de4" textLength="12" lengthAdjust="spacingAndGlyphs">S</text>
  </g>
  <!-- satellite dish -->
  <g fill="none">
    <circle cx="583" cy="739.700" r="15" stroke="#d9d9d9" stroke-width=".8"/>
    <ellipse cx="580" cy="741.500" rx="15.500" ry="5.800" transform="rotate(43 580 741.500)" stroke="url(#gDish)" stroke-width="1.100"/>
    <path d="M569.500 740 q1 9 11 14.500 M594 752 q-2.500 -10 -5 -15.500 l1 -4.500 l-5.500 3.500 q-1 -1.500 -1.500 -1" stroke="#d9d9d9" stroke-width=".8"/>
    <circle cx="589.600" cy="732.400" r="1.800" fill="#1f6f8c" stroke="#8ab" stroke-width=".6"/>
  </g>
  <!-- Reminders -->
  <g>
    <rect x="604" y="727" width="26" height="26" rx="6" fill="url(#gWhiteIc)"/>
    <circle cx="609.400" cy="733.200" r="1.900" fill="#2f7df6"/><circle cx="609.400" cy="740" r="1.900" fill="#f0403a"/><circle cx="609.400" cy="746.600" r="1.900" fill="#f59a1c"/>
    <path d="M614 733.200 h13 M614 740 h13 M614 746.600 h13" stroke="#cfcfd2" stroke-width=".9"/>
  </g>
  <!-- Notes -->
  <g>
    <rect x="638" y="727" width="26" height="26" rx="6" fill="#f5f2ea"/>
    <path d="M644 727 h14 a6 6 0 0 1 6 6 v.6 h-26 v-.6 a6 6 0 0 1 6 -6z" fill="url(#gNotes)"/>
    <path d="M638 738.200 h26 M638 742.800 h26 M638 747.400 h26" stroke="#dcd8cf" stroke-width=".7"/>
  </g>
  <!-- Freeform -->
  <g>
    <rect x="672" y="727" width="26" height="26" rx="6" fill="#fefefe"/>
    <circle cx="682.400" cy="743.200" r="7.400" fill="#f5623c"/>
    <rect x="680.800" y="730.600" width="13.600" height="13.200" rx="1.200" fill="#3cc8f4" opacity=".93"/>
    <path d="M677.300 743.600 q1.500 -7 5 -6.200 q2.200 .7 2.600 4 q1.200 -4.600 3 -4.200 q1.600 .5 1.800 3 q1 -3.300 2.300 -3 q1 .4 1.300 2 l1.600 -2.600" stroke="#123a78" stroke-width="1.300" fill="none" stroke-linecap="round"/>
  </g>
  <!-- QuickTime -->
  <g>
    <rect x="706" y="727" width="26" height="26" rx="6" fill="url(#gQTbg)"/>
    <circle cx="718.600" cy="739.400" r="8.700" fill="none" stroke="url(#gQTring)" stroke-width="3.600"/>
    <circle cx="718.600" cy="739.400" r="6.800" fill="url(#gQTblue)"/>
    <path d="M720 741 l7 8.200" stroke="#b9c2cf" stroke-width="3.200" stroke-linecap="round"/>
  </g>
  <!-- Paint palette -->
  <g>
    <path d="M739 739.500 q.5 -9 12 -11.500 q11 -1.500 15 5.500 q2 5 -3.500 7 q-3.500 1.500 -1 5 q2 4.500 -3.500 6 q-9 1.500 -15 -3.500 q-4 -3.500 -4 -8.500z" fill="#ebbf72" stroke="#c99a4c" stroke-width=".6"/>
    <circle cx="754" cy="739.500" r="1.700" fill="#5a4a36"/>
    <ellipse cx="746" cy="735" rx="3.300" ry="2.500" fill="#1f9a3c" transform="rotate(-25 746 735)"/>
    <ellipse cx="752.800" cy="731.800" rx="3" ry="2.300" fill="#f59a14"/>
    <ellipse cx="759.800" cy="733.800" rx="3" ry="2.400" fill="#d83a2a" transform="rotate(25 759.800 733.800)"/>
    <ellipse cx="745.600" cy="742.500" rx="3.400" ry="2.500" fill="#2f66d8" transform="rotate(20 745.600 742.500)"/>
    <ellipse cx="752.600" cy="746.600" rx="3.200" ry="2.500" fill="#7a2fc8" transform="rotate(25 752.600 746.600)"/>
    <path d="M766.800 726.600 L758 747.400" stroke="#2a6fe6" stroke-width="2.600" stroke-linecap="round"/>
    <path d="M758.300 746.600 L756.400 751" stroke="#e6e6e6" stroke-width="2.600"/>
    <path d="M757.200 750 l-2.200 .3 l-.6 4.300 l3.600 -2.700z" fill="#e69a1c"/><path d="M756.300 750.200 l1.800 .8" stroke="#3a2a1a" stroke-width="1.300"/>
  </g>
  <!-- LibreOffice -->
  <g>
    <rect x="774" y="727" width="26" height="26" rx="6" fill="#fefefe"/>
    <path d="M779.500 730.500 h9.500 l6 6.200 v12.800 h-15.500z" fill="url(#gLO)" stroke="#6d6d6d" stroke-width="1.300" stroke-linejoin="round"/>
    <path d="M789 730.500 h6 v6.200z" fill="#8a8a8a"/><path d="M789 730.500 v6.200 h6" fill="#f6f6f6" stroke="#6d6d6d" stroke-width=".9" stroke-linejoin="round"/>
  </g>
  <!-- Arduino -->
  <g>
    <rect x="808" y="727" width="26" height="26" rx="6" fill="url(#gArd)"/>
    <path d="M821 740 q-2.600 -3.600 -5.400 -3.600 a3.600 3.600 0 0 0 0 7.200 q2.800 0 5.400 -3.600 q2.600 -3.600 5.400 -3.600 a3.600 3.600 0 0 1 0 7.200 q-2.800 0 -5.400 -3.600z" fill="none" stroke="#fff" stroke-width="1.700"/>
    <path d="M814.300 740 h2.600 M825.400 740 h2.600 M826.700 738.700 v2.600" stroke="#fff" stroke-width=".8"/>
  </g>
  <!-- C -->
  <g>
    <path d="M847.500 727.500 h20.500 v20 l-5.500 5.500 h-20.500 v-20z" fill="#fefefe"/>
    <path d="M848.700 729.500 h17.300 v17.200 l-4.300 4.300 h-17.700 v-16.800z" fill="#1c6cf2"/>
    <path d="M861 734.500 h-4.800 a5.500 5.500 0 0 0 0 11 h4.800" stroke="#fff" stroke-width="2" fill="none"/>
  </g>
</g>
<g id="dock3">
  <!-- red/black zigzag -->
  <g>
    <path d="M879 724.800 h19.500 l5.500 5.500 v19.500 l-5.500 5.500 h-19.500 l-5.500 -5.500 v-19.500z" fill="#f4f4f4"/>
    <path d="M879.600 726.200 h18.300 l4.700 4.700 v18.300 l-4.700 4.700 h-18.300 l-4.700 -4.700 v-18.300z" fill="url(#gBlk)"/>
    <path d="M874.900 732 l6 6 v4 h5 v5 h5 v5.500 l1.500 1.400 h-12.800 l-4.700 -4.700z" fill="#f21616"/>
    <path d="M874.900 743 h4.600 v5 h4.500 v5.900 h-4.400 l-4.700 -4.700z" fill="#121212"/>
    <path d="M877 729 l2.600 -2.600 l4.400 4.400 l-2.600 2.600z M898.500 753.200 l2.800 -2.800 l-4.200 -4.200 l-2.800 2.800z" fill="#f0f0f0"/>
    <path d="M881.400 733.400 l2.600 -2.600 l3 3 v3 h3 l3 3 v3 h3 l1.200 1.200 l-2.800 2.800 l-1.400 -1.400 h-3 v-3 l-3 -3 h-3 v-3z" fill="#b9bcbf"/>
    <path d="M885.800 737.200 l2.800 -2.800 l2.600 2.600 l-2.800 2.800z" fill="#ededed"/>
  </g>
  <!-- System prefs -->
  <g>
    <rect x="910" y="727" width="26" height="26" rx="6" fill="url(#gPref)"/>
    <circle cx="923" cy="740" r="10" fill="#5d6064" stroke="#46484c" stroke-width=".8"/>
    <circle cx="923" cy="740" r="7.600" fill="#8c8f93" stroke="#3e4044" stroke-width="1.400"/>
    <circle cx="923" cy="740" r="5" fill="none" stroke="#4a4c50" stroke-width="1.300"/>
    <path d="M923 740 v-7.600 M923 740 l6.600 3.800 M923 740 l-6.600 3.800" stroke="#3e4044" stroke-width="1.400"/>
    <circle cx="923" cy="740" r="1.600" fill="#3e4044"/>
    <circle cx="934" cy="729.800" r="6.300" fill="#f3383a"/>
    <text x="934" y="733.400" text-anchor="middle" font-family="Liberation Sans, sans-serif" font-size="9.500" fill="#fff">1</text>
  </g>
  <path d="M947.700 726 V757 M1065.400 726 V757" stroke="#9c8c80" stroke-width=".9"/>
  <!-- Activity monitor -->
  <g>
    <rect x="959" y="727" width="26" height="26" rx="6" fill="#0b0d0d" stroke="#8f9494" stroke-width=".9"/>
    <rect x="961.800" y="729.800" width="20.400" height="20.400" rx="3.500" fill="#11302b"/>
    <path d="M961.800 735 h20.400 M961.800 740 h20.400 M961.800 745 h20.400 M967 729.800 v20.400 M972 729.800 v20.400 M977 729.800 v20.400" stroke="#245048" stroke-width=".5"/>
    <path d="M962.500 742 h3 l1 -11 l1.300 14 l1.200 -4 h2 l1.500 -2.500 l1.500 2 l1.200 1.200 l1.600 -2.200 l1.400 2.800 l2 .7" stroke="#3fb894" stroke-width=".9" fill="none" stroke-linejoin="round"/>
  </g>
  <!-- orange arcs -->
  <g transform="rotate(-8 1006 740)">
    <rect x="993.500" y="727.500" width="25" height="25" rx="1.500" fill="#3b3d40" stroke="#f2f2f2" stroke-width="2"/>
    <path d="M997.800 737 q8.200 -10.500 16.400 0 q-8.200 -5 -16.400 0z M997.800 743 q8.200 10.500 16.400 0 q-8.200 5 -16.400 0z" fill="#f2801e"/>
    <circle cx="997.600" cy="731.600" r="1.200" fill="#fff"/><circle cx="1014.400" cy="731.600" r="1.200" fill="#fff"/><circle cx="997.600" cy="748.400" r="1.500" fill="#fff"/>
  </g>
  <!-- Terminal -->
  <g>
    <rect x="1027.200" y="727" width="25.800" height="26" rx="6" fill="#0a0a0a" stroke="#a9aeb0" stroke-width=".9"/>
    <rect x="1029.400" y="729.200" width="21.400" height="21.600" rx="4" fill="#232323"/>
    <path d="M1031.800 731.800 l3.600 2 l-3.600 2" stroke="#fff" stroke-width="1.100" fill="none"/><path d="M1036 737 h4" stroke="#fff" stroke-width="1.200"/>
  </g>
  <!-- stack 1 -->
  <g>
    <path d="M1081 729.600 l1.200 -4.400 h9.500 l2.800 3.400 h6.500 v2z" fill="#f0f0f0"/>
    <rect x="1075.300" y="729.600" width="27" height="22.200" fill="#0b0b0c"/>
    <rect x="1076.200" y="730.400" width="25.200" height="1.300" fill="#5a3a30"/>
    <rect x="1078" y="734.700" width="22.500" height="2.300" fill="#9fb4aa"/>
    <rect x="1079" y="737" width="20.500" height="11.200" fill="#1522c8"/><rect x="1082" y="739" width="14" height="8" fill="#2436ea"/>
    <rect x="1089.500" y="740.500" width="2.600" height="2" fill="#9fb0c8"/><rect x="1100" y="737" width="1.600" height="11" fill="#b8d0c4"/>
  </g>
  <!-- stack 2 -->
  <g>
    <rect x="1108" y="728.600" width="30" height="22.400" fill="#273238"/>
    <rect x="1108" y="728.600" width="30" height="1.600" fill="#1d6a72"/>
    <rect x="1108" y="746" width="22" height="5" fill="#0d0f11"/>
    <path d="M1113 733 h5 M1113 737.600 h4 M1113 742 h14" stroke="#8a8450" stroke-width=".8" opacity=".8"/>
    <rect x="1128" y="745.200" width="9.400" height="9.200" rx="2" fill="url(#gArd)"/>
    <path d="M1132.700 749.800 q-1.100 -1.600 -2.300 -1.600 a1.600 1.600 0 0 0 0 3.200 q1.200 0 2.300 -1.600 q1.100 -1.600 2.300 -1.600 a1.600 1.600 0 0 1 0 3.200 q-1.200 0 -2.300 -1.600z" fill="none" stroke="#fff" stroke-width=".9"/>
  </g>
  <!-- trash -->
  <g>
    <path d="M1146 730 q11 -4 22.200 0 l-2.600 22 q-8.500 3.600 -17 0z" fill="url(#gTrash)"/>
    <ellipse cx="1157.100" cy="730" rx="11.100" ry="2.800" fill="#8e9296" stroke="#b8babc" stroke-width=".6"/>
    <path d="M1148.500 729 l2.500 -3 l3 1.500 l2 -2.300 l3 2 l2.500 -1.700 l2 2.500 l2 1.200 q-8 3 -17 -.2z" fill="#f2f2f2"/>
    <path d="M1152 727.500 l2 1 M1158.500 727 l2 .6 M1155.500 728.600 l1.500 -.8" stroke="#3a6ad0" stroke-width=".9"/><path d="M1161 728.600 l1.600 -.6 M1150.500 728.800 l1.200 .2" stroke="#d04a2a" stroke-width=".9"/>
  </g>
  <!-- running dots -->
  <g fill="#f6dcc0"><circle cx="208.900" cy="758.800" r="1.900"/><circle cx="277" cy="758.800" r="1.900"/><circle cx="344.900" cy="758.800" r="1.900"/></g>
  <g fill="#e6dcd4"><circle cx="651" cy="758.800" r="1.900"/><circle cx="821" cy="758.800" r="1.900"/><circle cx="972.100" cy="758.800" r="1.900"/><circle cx="1005.900" cy="758.800" r="1.900"/><circle cx="1039.900" cy="758.800" r="1.900"/></g>
</g>
<text x="1280" y="738" font-family="Liberation Sans, sans-serif" font-weight="bold" font-size="13" fill="#e8e4dc" textLength="48.200" lengthAdjust="spacingAndGlyphs" style="text-shadow:0 1px 2px rgba(0,0,0,.5)">Untitled</text>
<!-- ===== menubar icons ===== -->
<g id="menuicons">
  <path transform="translate(26.400 0) scale(.9 1) translate(-26.400 0)" d="M29.600 3.300 q.2 1.600 -.9 2.900 q-1.100 1.300 -2.500 1.200 q-.2 -1.500 .9 -2.800 q1.100 -1.200 2.500 -1.300z M26.300 7.900 q.9 0 2 -.5 q1.200 -.5 2.300 -.3 q2 .3 3 1.800 q-1.900 1.200 -1.800 3.300 q.1 2.300 2.200 3.200 q-.5 1.400 -1.400 2.600 q-1.100 1.500 -2.300 1.500 q-.8 0 -1.600 -.4 q-.9 -.4 -1.800 -.4 q-.9 0 -1.800 .4 q-.8 .4 -1.400 .4 q-1.200 0 -2.500 -1.700 q-1.800 -2.500 -1.800 -5.500 q0 -2.300 1.200 -3.600 q1.100 -1.300 2.800 -1.300 q.9 0 1.800 .3 q.8 .3 1.100 .2z" fill="#f4f2ee"/>
  <rect x="1041.600" y="5.500" width="13.200" height="9.200" rx="2.200" fill="none" stroke="#f2efe8" stroke-width="1.300"/>
  <rect x="1044.800" y="8.800" width="13" height="9.400" rx="2.200" fill="#7b6a4c" stroke="#f2efe8" stroke-width="1.300"/>
  <g fill="none" stroke="#ab9c80" stroke-linecap="round">
    <path d="M1080 9.500 q7.700 -6.500 15.400 0" stroke-width="1.800"/>
    <path d="M1082.800 12.400 q4.900 -4.200 9.800 0" stroke-width="1.800"/>
    <path d="M1085.500 15.200 q2.200 -1.800 4.400 0" stroke-width="1.800"/>
  </g>
  <path d="M1086.200 15.800 l1.500 1.700 l1.500 -1.700 q-1.500 -1 -3 0z" fill="#ab9c80"/>
  <rect x="1118" y="4.200" width="22.200" height="15.600" rx="3" fill="#f1eee9"/>
  <text x="1129.300" y="15.800" text-anchor="middle" font-family="Liberation Sans, sans-serif" font-weight="bold" font-size="10.500" fill="#5a4e3c" textLength="13.600" lengthAdjust="spacingAndGlyphs">РУ</text>
  <circle cx="1164.900" cy="10.800" r="4.500" fill="none" stroke="#f2efe8" stroke-width="1.400"/>
  <path d="M1168.200 14.200 l4 4" stroke="#f2efe8" stroke-width="1.600" stroke-linecap="round"/>
  <rect x="1192.600" y="6.200" width="13.400" height="5.400" rx="2.700" fill="none" stroke="#f2efe8" stroke-width="1.200"/>
  <circle cx="1195.500" cy="8.900" r="1.500" fill="#f2efe8"/>
  <rect x="1192" y="13.200" width="14.600" height="6" rx="3" fill="#f2efe8"/>
  <circle cx="1203.400" cy="16.200" r="1.500" fill="#6b5a3e"/>
</g>
<!-- ===== SeaMonkey throbber ===== -->
<g id="throbber">
  <circle cx="1342.900" cy="79.750" r="15.600" fill="url(#gSM2)"/>
  <path d="M1327.400 78.600 q4 -1.800 8 -.6 q4.500 1.400 9 .3 q6 -1.700 14 .1 v2.800 q-7 -1.600 -13 .2 q-5 1.500 -9.500 .3 q-4.500 -1.200 -8.600 .5z" fill="#a99cf8" opacity=".9"/>
  <path d="M1350 68.200 q-3.200 -.6 -4.800 2.400 q-1.400 3 -2.300 6 q-1.200 4 -3.200 7 q-3.400 4.600 -8 7.400 l-3.800 2.200 l.4 .9 q4.600 -1.400 8.600 -3.800 q2.600 -1.300 5.600 -1.900 q4.400 -1 7.400 -4.400 q4 -4.600 3 -10.400 q-.4 -2.400 -1.400 -3.800 l.7 -.9z" fill="url(#gBird2)"/>
</g>
<!--ICONS-->
</svg>

<div id="redbox" class="abs" style="z-index:5;left:122px;top:40px;width:77px;height:71px;border:8px solid #fb0007;border-radius:3px;box-sizing:border-box;"></div>

</body>
</html>
